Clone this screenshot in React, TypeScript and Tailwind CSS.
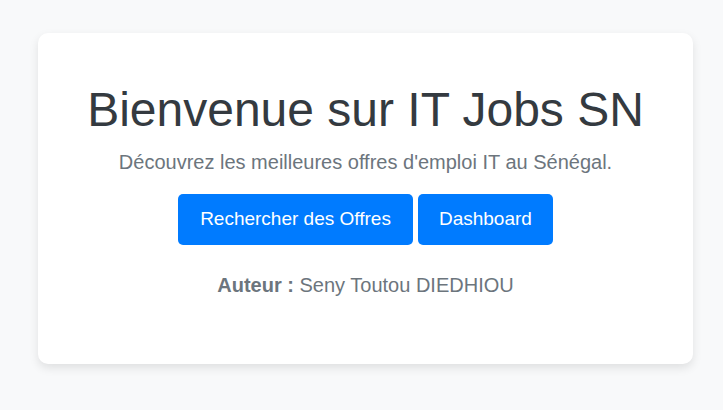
import React from 'react';

const App: React.FC = () => {
  return (
    <div className="min-h-[410px] bg-[#f8f9fa] pt-[33px] pl-[38px] font-['Liberation_Sans',Arial,sans-serif]">
      {/* Hero card */}
      <div className="w-[655px] rounded-[10px] bg-white px-8 pt-12 pb-12 text-center shadow-[0_4px_10px_rgba(0,0,0,0.1)]">
        <h1 className="mb-2 text-[48px] leading-[1.2] font-normal text-[#343a40]">
          Bienvenue sur IT Jobs SN
        </h1>
        <p className="mb-4 text-[20px] leading-[1.5] text-[#6c757d]">
          Découvrez les meilleures offres d'emploi IT au Sénégal.
        </p>

        <div className="flex justify-center gap-[5px] pt-[1px]">
          <button className="h-[51px] rounded-[5px] bg-[#007bff] px-[22px] text-[19px] text-white">
            Rechercher des Offres
          </button>
          <button className="h-[51px] rounded-[5px] bg-[#007bff] px-[21px] text-[19px] text-white">
            Dashboard
          </button>
        </div>

        <p className="mt-[25px] mb-4 text-[20px] leading-[1.5] text-[#6c757d]">
          <strong className="font-bold">Auteur :</strong> Seny Toutou DIEDHIOU
        </p>
      </div>
    </div>
  );
};

export default App;
